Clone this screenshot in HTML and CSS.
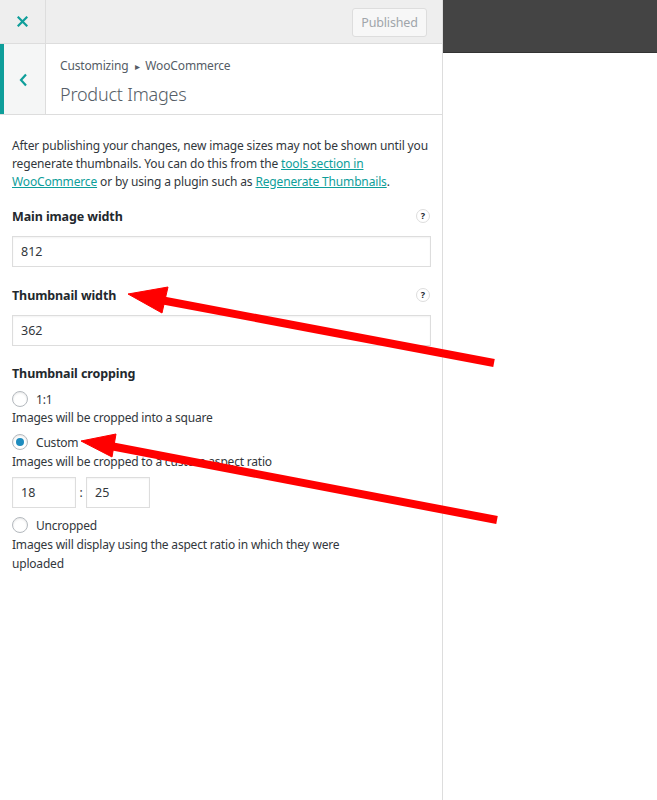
FILE: index.html
```html
<!DOCTYPE html>
<html lang="en">
<head>
<meta charset="utf-8">
<title>Product Images</title>
<link rel="stylesheet" href="styles.css">
</head>
<body>
<div class="layout">
  <aside class="panel">
    <header class="topbar">
      <button class="close" aria-label="Close">
        <svg width="11" height="11" viewBox="0 0 11 11"><path d="M1.5 1.5 L9.5 9.5 M9.5 1.5 L1.5 9.5" stroke="#0e9e9a" stroke-width="2.2" stroke-linecap="square"/></svg>
      </button>
      <button class="publish">Published</button>
    </header>
    <div class="section-head">
      <button class="back" aria-label="Back">
        <svg width="9" height="14" viewBox="0 0 9 14"><path d="M7 1.5 L2 7 L7 12.5" fill="none" stroke="#0e9e9a" stroke-width="2.2"/></svg>
      </button>
      <div class="titles">
        <div class="crumb">Customizing <span class="tri">&#9656;</span> WooCommerce</div>
        <h1 class="title">Product Images</h1>
      </div>
    </div>
    <div class="content">
      <p class="desc">After publishing your changes, new image sizes may not be shown until you regenerate thumbnails. You can do this from the <a href="#">tools section in WooCommerce</a> or by using a plugin such as <a href="#">Regenerate Thumbnails</a>.</p>

      <div class="field">
        <div class="label-row"><span class="label">Main image width</span><span class="help">?</span></div>
        <input class="text-input" type="text" value="812">
      </div>

      <div class="field field-2">
        <div class="label-row"><span class="label">Thumbnail width</span><span class="help">?</span></div>
        <input class="text-input" type="text" value="362">
      </div>

      <div class="field field-3">
        <div class="label-row"><span class="label">Thumbnail cropping</span></div>
        <div class="radio-row"><span class="radio"></span><span>1:1</span></div>
        <div class="option-desc">Images will be cropped into a square</div>
        <div class="radio-row radio-custom"><span class="radio checked"></span><span>Custom</span></div>
        <div class="option-desc desc-custom">Images will be cropped to a custom aspect ratio</div>
        <div class="ratio">
          <input class="ratio-input" type="text" value="18">
          <span class="colon">:</span>
          <input class="ratio-input" type="text" value="25">
        </div>
        <div class="radio-row radio-last"><span class="radio"></span><span>Uncropped</span></div>
        <div class="option-desc desc-last">Images will display using the aspect ratio in which they were uploaded</div>
      </div>
    </div>
  </aside>
  <main class="preview">
    <div class="preview-bar"></div>
  </main>
</div>
<svg class="annotations" width="657" height="800" viewBox="0 0 657 800">
  <g fill="#ff0000" stroke="#ff0000" stroke-linejoin="round">
    <line x1="150" y1="298" x2="494" y2="363" stroke-width="8"/>
    <polygon points="128,294 168,287 162,313" stroke-width="1"/>
    <line x1="100" y1="444" x2="497" y2="520" stroke-width="8"/>
    <polygon points="81,441 116,434 112,457" stroke-width="1"/>
  </g>
</svg>
</body>
</html>
```
FILE: styles.css
```css
* { box-sizing: border-box; }
html, body { margin: 0; padding: 0; }
body {
  width: 657px;
  height: 800px;
  background: #fff;
  font-family: "Noto Sans", "Open Sans", sans-serif;
  font-size: 12px;
  letter-spacing: -0.15px;
  color: #32373c;
  position: relative;
  overflow: hidden;
}
.layout { display: flex; height: 800px; }
.panel {
  width: 443px;
  flex: none;
  border-right: 1px solid #ddd;
  background: #fff;
}
.preview { flex: 1; }
.preview-bar {
  height: 53px;
  background: #444;
  border-bottom: 1px solid #333;
}
.topbar {
  height: 44px;
  background: #eee;
  border-bottom: 1px solid #ddd;
  display: flex;
  align-items: center;
}
.close {
  width: 46px;
  height: 43px;
  border: 0;
  border-right: 1px solid #ddd;
  background: #eee;
  display: flex;
  align-items: center;
  justify-content: center;
  padding: 0;
}
.publish {
  margin-left: auto;
  margin-right: 15px;
  margin-top: 2px;
  width: 75px;
  height: 29px;
  border: 1px solid #ddd;
  border-radius: 3px;
  background: #f7f7f7;
  color: #a0a5aa;
  font-family: inherit;
  font-size: 12.5px;
  letter-spacing: -0.15px;
  padding: 0;
}
.section-head {
  height: 71px;
  display: flex;
  border-bottom: 1px solid #ddd;
}
.back {
  width: 46px;
  border: 0;
  border-left: 4px solid #0e9e9a;
  border-right: 1px solid #ddd;
  background: #f5f6f6;
  display: flex;
  align-items: center;
  justify-content: center;
  padding: 2px 2px 0 0;
}
.titles { padding: 13px 0 0 14px; }
.crumb { font-size: 12px; line-height: 18px; color: #555d66; }
.tri { font-size: 10px; margin: 0 3px; }
.title {
  margin: 6px 0 0;
  font-size: 18px;
  font-weight: 300;
  letter-spacing: -0.2px;
  line-height: 26px;
  color: #555d66;
}
.content { padding: 22px 12px 0; }
.desc {
  margin: 0;
  font-size: 12px;
  line-height: 18px;
  color: #32373c;
}
.desc a { color: #0e9e9a; text-decoration: underline; }
.field { margin-top: 15px; }
.field-2 { margin-top: 18px; }
.field-3 { margin-top: 17px; }
.label-row {
  display: flex;
  align-items: center;
  justify-content: space-between;
  height: 20px;
}
.label { font-weight: 700; font-size: 12.5px; letter-spacing: -0.1px; color: #23282d; }
.help {
  width: 14px;
  height: 14px;
  border-radius: 50%;
  border: 1px solid #ddd;
  font-size: 9px;
  font-weight: 700;
  line-height: 12px;
  letter-spacing: 0;
  text-align: center;
  color: #23282d;
  background: #fff;
}
.text-input {
  display: block;
  width: 419px;
  height: 31px;
  margin-top: 10px;
  border: 1px solid #ddd;
  box-shadow: inset 0 1px 2px rgba(0,0,0,0.05);
  padding: 0 8px;
  font-family: inherit;
  font-size: 12.5px;
  color: #32373c;
  background: #fff;
}
.radio-row {
  display: flex;
  align-items: center;
  gap: 8px;
  height: 20px;
  margin-top: 6px;
  font-size: 12px;
  letter-spacing: -0.2px;
  color: #32373c;
}
.radio-custom { margin-top: 5px; }
.radio-last { margin-top: 7px; }
.radio {
  width: 16px;
  height: 16px;
  border-radius: 50%;
  border: 1px solid #b4b9be;
  background: #fff;
  box-shadow: inset 0 1px 2px rgba(0,0,0,0.1);
  display: flex;
  align-items: center;
  justify-content: center;
}
.radio.checked::after {
  content: "";
  width: 8px;
  height: 8px;
  border-radius: 50%;
  background: #1e8cbe;
}
.option-desc {
  max-width: 350px;
  font-size: 12px;
  letter-spacing: -0.2px;
  line-height: 18px;
  color: #32373c;
}
.desc-custom { margin-top: 1px; }
.desc-last { line-height: 19px; }
.ratio {
  display: flex;
  align-items: center;
  margin-top: 6px;
}
.ratio-input {
  width: 64px;
  height: 31px;
  border: 1px solid #ddd;
  box-shadow: inset 0 1px 2px rgba(0,0,0,0.05);
  padding: 0 8px;
  font-family: inherit;
  font-size: 12.5px;
  color: #32373c;
  background: #fff;
}
.colon { width: 10px; text-align: center; color: #32373c; }
.annotations {
  position: absolute;
  left: 0;
  top: 0;
  pointer-events: none;
}
```
